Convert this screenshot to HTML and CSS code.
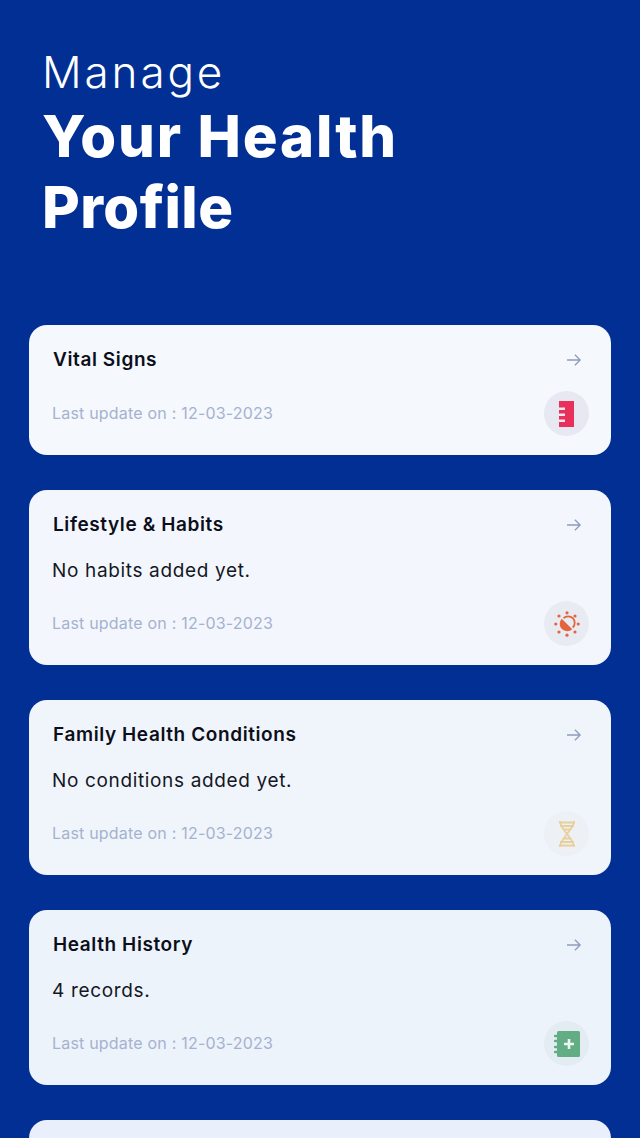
FILE: index.html
```html
<!DOCTYPE html>
<html lang="en">
<head>
<meta charset="utf-8">
<title>Your Health Profile</title>
<link rel="stylesheet" href="styles.css">
</head>
<body>
<main class="screen">
  <header class="hero">
    <p class="hero-light">Manage</p>
    <h1 class="hero-bold"><span class="line-wide">Your Health</span><br><span class="line-tight">Profile</span></h1>
  </header>
  <section class="cards">
    <article class="card tone-1">
      <div class="card-head">
        <h2 class="card-title">Vital Signs</h2>
        <svg class="arrow" viewBox="0 0 18 16"><path d="M1 8h15M10 2l6 6-6 6"/></svg>
      </div>
      <div class="card-foot">
        <span class="stamp">Last update on : 12-03-2023</span>
        <span class="badge badge-red">
          <svg viewBox="0 0 15 26" width="15" height="26"><path fill="#e8305a" d="M0 0h15v26H0v-5h6v-2.500H0v-3.500h6v-2.500H0V9h6V6.500H0z"/></svg>
        </span>
      </div>
    </article>
    <article class="card tone-2">
      <div class="card-head">
        <h2 class="card-title">Lifestyle &amp; Habits</h2>
        <svg class="arrow" viewBox="0 0 18 16"><path d="M1 8h15M10 2l6 6-6 6"/></svg>
      </div>
      <p class="card-note">No habits added yet.</p>
      <div class="card-foot">
        <span class="stamp">Last update on : 12-03-2023</span>
        <span class="badge badge-orange">
          <svg viewBox="0 0 28 28" width="28" height="28">
            <g fill="#e2653f">
              <path d="M8.700 8.700A7.500 7.500 0 0 0 19.300 19.300z"/>
              <path d="M10.500 8.200A6.500 6.500 0 0 1 19.800 17.500" fill="none" stroke="#e2653f" stroke-width="1.800"/>
              <circle cx="14" cy="2.800" r="1.600"/><circle cx="14" cy="25.200" r="1.600"/>
              <circle cx="2.800" cy="14" r="1.600"/><circle cx="25.200" cy="14" r="1.600"/>
              <circle cx="6" cy="6" r="1.600"/><circle cx="22" cy="6" r="1.600"/>
              <circle cx="6" cy="22" r="1.600"/><circle cx="22" cy="22" r="1.600"/>
            </g>
          </svg>
        </span>
      </div>
    </article>
    <article class="card tone-3">
      <div class="card-head">
        <h2 class="card-title">Family Health Conditions</h2>
        <svg class="arrow" viewBox="0 0 18 16"><path d="M1 8h15M10 2l6 6-6 6"/></svg>
      </div>
      <p class="card-note">No conditions added yet.</p>
      <div class="card-foot">
        <span class="stamp">Last update on : 12-03-2023</span>
        <span class="badge badge-gold">
          <svg viewBox="0 0 20 28" width="20" height="28" fill="none" stroke="#e8d09c" stroke-width="1.800">
            <path d="M3 1c0 9 14 17 14 26M17 1c0 9-14 17-14 26M2 2.500h16M3 6h14M6 9.500h8M6 18.500h8M3 22h14M2 25.500h16"/>
          </svg>
        </span>
      </div>
    </article>
    <article class="card tone-4">
      <div class="card-head">
        <h2 class="card-title">Health History</h2>
        <svg class="arrow" viewBox="0 0 18 16"><path d="M1 8h15M10 2l6 6-6 6"/></svg>
      </div>
      <p class="card-note">4 records.</p>
      <div class="card-foot">
        <span class="stamp">Last update on : 12-03-2023</span>
        <span class="badge badge-green">
          <svg viewBox="0 0 26 28" width="26" height="28">
            <rect x="3" y="1" width="23" height="26" rx="1.500" fill="#62ad84"/>
            <path d="M15 9v10M10 14h10" stroke="#eef6f1" stroke-width="2.600"/>
            <path d="M1 6h4M1 11h4M1 17h4M1 22h4" stroke="#62ad84" stroke-width="2.400" stroke-linecap="round"/>
          </svg>
        </span>
      </div>
    </article>
    <article class="card tone-5"></article>
  </section>
</main>
</body>
</html>
```
FILE: styles.css
```css
html, body {
  margin: 0;
  height: 1138px;
  overflow: hidden;
}

body {
  background: #012f94;
  font-family: Inter, "Noto Sans", sans-serif;
}

.screen {
  padding: 0 29px;
}

.hero {
  padding: 44px 13px 0;
  color: #fff;
}

.hero-light {
  margin: 0;
  font-size: 44px;
  line-height: 57px;
  font-weight: 300;
  letter-spacing: 2.900px;
}

.hero-bold {
  margin: 0;
  font-size: 58px;
  line-height: 71px;
  font-weight: 800;
}

.line-wide {
  letter-spacing: 1.850px;
}

.line-tight {
  letter-spacing: 0.400px;
}

.cards {
  display: flex;
  flex-direction: column;
  gap: 35px;
  margin-top: 82px;
}

.card {
  border-radius: 18px;
  padding: 25px 22px 19px 24px;
}

.tone-1 { background: #f5f8fd; }
.tone-2 { background: #f3f7fd; }
.tone-3 { background: #f0f5fc; }
.tone-4 { background: #edf3fb; }
.tone-5 { background: #e9f0fb; height: 120px; }

.card-head {
  display: flex;
  justify-content: space-between;
  align-items: center;
  height: 20px;
}

.card-title {
  margin: 0;
  font-size: 19px;
  font-weight: 600;
  line-height: 20px;
  letter-spacing: 0.600px;
  color: #0c0f1a;
}

.arrow {
  width: 16px;
  height: 14px;
  margin-right: 7px;
  fill: none;
  stroke: #8f9cba;
  stroke-width: 1.500;
}

.card-note {
  margin: 23px 0 17px -1px;
  font-size: 19px;
  line-height: 26px;
  letter-spacing: 0.650px;
  color: #14171f;
}

.card-foot {
  display: flex;
  justify-content: space-between;
  align-items: center;
  margin-left: -1px;
}

.card-head + .card-foot {
  margin-top: 21px;
}

.stamp {
  margin-bottom: 2px;
  font-size: 16px;
  letter-spacing: 0.200px;
  color: #a5b2cf;
}

.badge {
  display: flex;
  align-items: center;
  justify-content: center;
  width: 45px;
  height: 45px;
  border-radius: 50%;
}

.badge-red { background: #e7e8f2; }
.badge-orange { background: #e9ebf2; }
.badge-gold { background: #edf0f5; }
.badge-green { background: #e4ecf3; }
```
